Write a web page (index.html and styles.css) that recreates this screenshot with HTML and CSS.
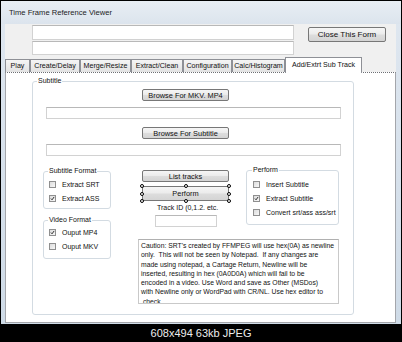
FILE: index.html
```html
<!DOCTYPE html>
<html lang="en">
<head>
    <meta charset="UTF-8">
    <title>Time Frame Reference Viewer</title>
    <link rel="stylesheet" href="styles.css">
</head>
<body>
    <div class="shot">
        <div class="window">
            <div class="titlebar">Time Frame Reference Viewer</div>
            <div class="client">
                <div class="toprow">
                    <div class="fields">
                        <div class="textbox top-a"></div>
                        <div class="textbox top-b"></div>
                    </div>
                    <button class="btn close-btn">Close This Form</button>
                </div>

                <div class="tabs">
                    <div class="tab w-play">Play</div>
                    <div class="tab w-create">Create/Delay</div>
                    <div class="tab w-merge">Merge/Resize</div>
                    <div class="tab w-extract">Extract/Clean</div>
                    <div class="tab w-config">Configuration</div>
                    <div class="tab w-calc">Calc/Histogram</div>
                    <div class="tab active w-add">Add/Extrt Sub Track</div>
                </div>

                <div class="tabpage">
                    <fieldset class="group main-group">
                        <legend>Subtitle</legend>
                        <div class="inner">
                            <button class="btn browse first">Browse For MKV. MP4</button>
                            <div class="textbox wide tb-1"></div>
                            <button class="btn browse second">Browse For Subtitle</button>
                            <div class="textbox wide tb-2"></div>

                            <div class="lower">
                                <div class="left-col">
                                    <fieldset class="group small sub-format">
                                        <legend>Subtitle Format</legend>
                                        <div class="check"><span class="box"></span>Extract SRT</div>
                                        <div class="check"><span class="box on"><svg viewBox="0 0 7 7"><path d="M1.3 3.6 L2.9 5.3 L5.8 1.3"/></svg></span>Extract ASS</div>
                                    </fieldset>
                                    <fieldset class="group small vid-format">
                                        <legend>Video Format</legend>
                                        <div class="check"><span class="box on"><svg viewBox="0 0 7 7"><path d="M1.3 3.6 L2.9 5.3 L5.8 1.3"/></svg></span>Ouput MP4</div>
                                        <div class="check"><span class="box"></span>Ouput MKV</div>
                                    </fieldset>
                                </div>

                                <div class="mid-col">
                                    <button class="btn list-btn">List tracks</button>
                                    <div class="selected">
                                        <button class="btn perform-btn">Perform</button>
                                        <span class="handle h-tl"></span>
                                        <span class="handle h-tm"></span>
                                        <span class="handle h-tr"></span>
                                        <span class="handle h-ml"></span>
                                        <span class="handle h-mr"></span>
                                        <span class="handle h-bl"></span>
                                        <span class="handle h-bm"></span>
                                        <span class="handle h-br"></span>
                                    </div>
                                    <div class="track-label">Track ID (0,1.2. etc.</div>
                                    <div class="textbox track-box"></div>
                                </div>

                                <fieldset class="group small perform-group">
                                    <legend>Perform</legend>
                                    <div class="check"><span class="box"></span>Insert Subtitle</div>
                                    <div class="check"><span class="box on"><svg viewBox="0 0 7 7"><path d="M1.3 3.6 L2.9 5.3 L5.8 1.3"/></svg></span>Extract Subtitle</div>
                                    <div class="check"><span class="box"></span>Convert srt/ass ass/srt</div>
                                </fieldset>

                                <div class="caution">Caution: SRT's created by FFMPEG will use hex(0A) as newline
only.  This will not be seen by Notepad.  If any changes are
made using notepad, a Cartage Return, Newline will be
inserted, resulting in hex (0A0D0A) which will fail to be
encoded in a video. Use Word and save as Other (MSDos)
with Newline only or WordPad with CR/NL. Use hex editor to
 check.</div>
                            </div>
                        </div>
                    </fieldset>
                </div>
            </div>
        </div>
        <div class="caption">608x494 63kb JPEG</div>
    </div>
</body>
</html>
```

FILE: styles.css
```css
* {
    box-sizing: border-box;
}
body {
    margin: 0;
    background: #000;
    font-family: "Liberation Sans", Arial, sans-serif;
    font-size: 7px;
    color: #111;
}
.shot {
    width: 402px;
    height: 342px;
    background: #000;
    padding: 1px 1px 0 1px;
    display: flex;
    flex-direction: column;
}
.window {
    height: 323px;
    background: linear-gradient(#dfe7f0, #cfdbe7);
    display: flex;
    flex-direction: column;
}
.titlebar {
    height: 23px;
    line-height: 24px;
    padding-left: 8px;
    font-size: 7.6px;
    color: #1b1b1b;
    background: linear-gradient(#e8eef4, #dce4ed);
}
.client {
    flex: 1;
    margin: 0 5px 1px 4px;
    background: #f0f0f0;
    display: flex;
    flex-direction: column;
}

/* top strip with the two text boxes */
.toprow {
    height: 33px;
    display: flex;
    padding: 1px 0 0 27px;
}
.fields {
    width: 262px;
    display: flex;
    flex-direction: column;
    gap: 1px;
}
.textbox {
    background: #fff;
    border: 1px solid #d2d2d2;
    border-top-color: #b8b8b8;
}
.top-a {
    height: 15px;
}
.top-b {
    height: 14px;
}
.btn {
    display: block;
    padding: 0;
    font-family: inherit;
    font-size: 7.4px;
    color: #111;
    text-align: center;
    background: linear-gradient(#f6f6f6 0%, #ebebeb 48%, #dddddd 52%, #d4d4d4 100%);
    border: 1px solid #777;
    border-radius: 2px;
}
.close-btn {
    width: 78px;
    height: 15px;
    margin: 2px 0 0 14px;
    font-size: 8px;
}

/* tab strip */
.tabs {
    height: 15px;
    display: flex;
    align-items: flex-end;
}
.tab {
    height: 13px;
    line-height: 12px;
    font-size: 7.1px;
    text-align: center;
    white-space: nowrap;
    background: linear-gradient(#f5f5f5, #e2e2e2);
    border: 1px solid #8e9096;
    border-bottom: none;
}
.tab.active {
    height: 16px;
    margin-bottom: -1px;
    line-height: 14px;
    background: #fff;
    position: relative;
}
.w-play { width: 25px; }
.w-create { width: 50px; }
.w-merge { width: 51px; }
.w-extract { width: 52px; }
.w-config { width: 49px; }
.w-calc { width: 53px; }
.w-add { width: 77px; }

.tabpage {
    flex: 1;
    background: #fff;
    border: 1px solid #a4a6ab;
    border-top: 1px dotted #6d6f74;
    padding: 4px 0 0 26px;
}

/* group boxes */
.group {
    margin: 0;
    border: 1px solid #d3dbe2;
    border-radius: 3px;
    min-width: 0;
}
.group legend {
    padding: 0 1px;
    line-height: 8px;
    font-size: 7px;
}
.main-group {
    width: 322px;
    padding: 0 12px 10px 4px;
}
.inner {
    padding-left: 6px;
}
.browse {
    width: 87px;
    height: 12px;
    margin-left: 99px;
}
.browse.first {
    margin-top: 4px;
}
.browse.second {
    margin-top: 8px;
}
.wide {
    width: 295px;
    height: 12px;
    margin-left: 3px;
}
.tb-1 {
    margin-top: 6px;
}
.tb-2 {
    margin-top: 5px;
}

.lower {
    margin-top: 10px;
    display: grid;
    grid-template-columns: 68px 27px 108px 93px;
    grid-template-rows: auto auto;
}
.left-col {
    grid-column: 1;
    grid-row: 1 / 3;
}
.small {
    padding: 0 0 0 4px;
}
.sub-format {
    margin-top: 1px;
    padding-top: 2px;
    padding-bottom: 3px;
}
.vid-format {
    margin-top: 7px;
    padding-top: 1px;
    padding-bottom: 5px;
}
.check {
    height: 14px;
    display: flex;
    align-items: center;
    padding-left: 1px;
    white-space: nowrap;
}
.box {
    width: 7px;
    height: 7px;
    margin-right: 6px;
    border: 1px solid #8f8f8f;
    background: linear-gradient(135deg, #dcdcdc, #f7f7f7);
    display: flex;
}
.box svg {
    width: 5px;
    height: 5px;
    fill: none;
    stroke: #222;
    stroke-width: 1.3;
}

.mid-col {
    grid-column: 3;
    grid-row: 1;
    padding-left: 4px;
}
.list-btn {
    width: 87px;
    height: 12px;
    margin-top: 4px;
}
.selected {
    position: relative;
    width: 87px;
    margin-top: 4px;
}
.perform-btn {
    width: 87px;
    height: 15px;
}
.handle {
    position: absolute;
    width: 4px;
    height: 4px;
    border: 1px solid #000;
    border-radius: 50%;
    background: #fff;
}
.h-tl, .h-tm, .h-tr { top: -2px; }
.h-ml, .h-mr { top: 5.5px; }
.h-bl, .h-bm, .h-br { bottom: -2px; }
.h-tl, .h-ml, .h-bl { left: -2px; }
.h-tm, .h-bm { left: 41.5px; }
.h-tr, .h-mr, .h-br { right: -2px; }
.track-label {
    margin: 3px 0 0 15px;
    line-height: 8px;
    white-space: nowrap;
}
.track-box {
    width: 62px;
    height: 12px;
    margin: 3px 0 0 13px;
}

.perform-group {
    grid-column: 4;
    grid-row: 1;
    align-self: start;
    padding: 3px 0 5px 5px;
}
.caution {
    grid-column: 3 / 5;
    grid-row: 2;
    height: 65px;
    margin-top: 12px;
    padding: 1px 2px 0;
    border: 1px solid #c9c9c9;
    border-top-color: #b0b0b0;
    white-space: pre;
    overflow: hidden;
    font-size: 6.8px;
    line-height: 9.3px;
}

.caption {
    flex: 1;
    color: #ededed;
    font-size: 11px;
    text-align: center;
    line-height: 18px;
}
```
